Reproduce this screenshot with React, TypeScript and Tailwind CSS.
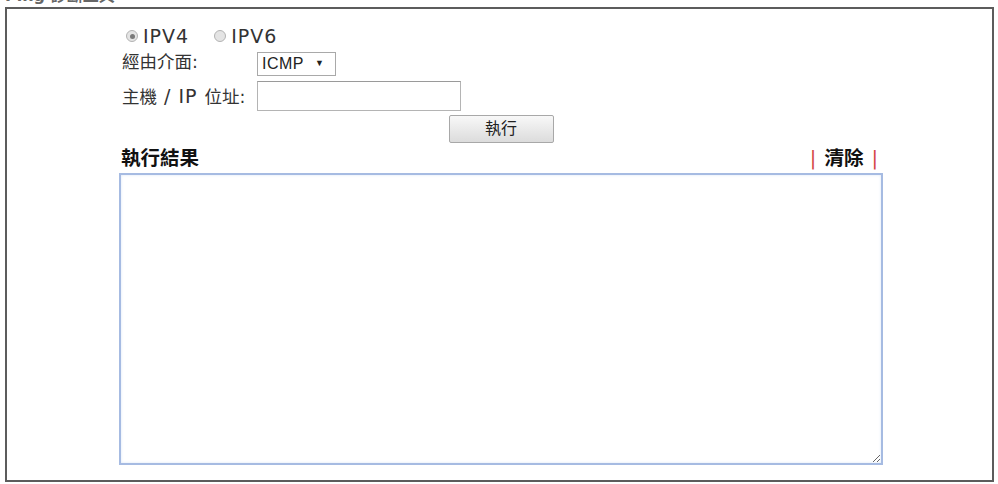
import React from 'react';

const Radio: React.FC<{ checked?: boolean }> = ({ checked }) => (
  <span className="inline-flex h-[12px] w-[12px] items-center justify-center rounded-full border border-[#b3b3b3] bg-[#e4e4e4]">
    {checked && <span className="h-[5px] w-[5px] rounded-full bg-[#7a7a7a]" />}
  </span>
);

const App: React.FC = () => {
  return (
    <div
      className="h-[484px] w-[998px] overflow-hidden bg-white text-[17.5px] text-[#333]"
      style={{ fontFamily: '"DejaVu Sans", "Noto Sans CJK TC", sans-serif' }}
    >
      {/* cut-off page title */}
      <div className="h-[7px] overflow-hidden pl-[5px]">
        <div className="-mt-[13px] text-[16px] font-bold leading-[17px] text-[#666]">Ping 診斷工具</div>
      </div>

      <div className="ml-[5px] h-[475px] w-[989px] border-2 border-[#5c5c5c] pl-[112px] pt-[15px]">
        <div className="w-[764px]">
          {/* protocol */}
          <div className="flex h-[24px] items-center">
            <span className="ml-[7px] mr-[5px] flex"><Radio checked /></span>
            <span className="text-[19px] tracking-[1px]">IPV4</span>
            <span className="ml-[25px] mr-[5px] flex"><Radio /></span>
            <span className="text-[19px] tracking-[1px]">IPV6</span>
          </div>

          {/* interface */}
          <div className="mt-[2px] flex h-[28px] items-center">
            <span className="w-[138px] shrink-0 pb-[4px] pl-[3px]">經由介面:</span>
            <div
              className="flex h-[24px] w-[79px] items-center border border-[#a9a9a9] pl-[4px] text-[16px] text-[#222]"
              style={{ fontFamily: '"Liberation Sans", sans-serif' }}
            >
              <span className="tracking-[0.5px]">ICMP</span>
              <span className="ml-[11px] text-[9px]">▼</span>
            </div>
          </div>

          {/* host */}
          <div className="mt-[2px] flex h-[32px] items-center">
            <span className="w-[138px] shrink-0 pl-[3px]">
              主機<span className="text-[19px] tracking-[1px]"> / IP </span>位址:
            </span>
            <input
              type="text"
              className="h-[30px] w-[204px] border border-[#b4b4b4] border-t-[#9a9a9a] bg-white outline-none"
            />
          </div>

          {/* run */}
          <div className="mt-[3px] flex h-[28px] justify-center">
            <button className="h-[28px] w-[105px] rounded-[2px] border border-[#a8a8a8] bg-gradient-to-b from-[#f8f8f8] to-[#dcdcdc] text-[16px] text-[#222]">
              執行
            </button>
          </div>

          {/* result header */}
          <div className="mt-[3px] flex h-[26px] items-center justify-between pr-[5px]">
            <span className="pl-[2px] text-[19.5px] font-bold text-[#111]">執行結果</span>
            <span className="flex items-center text-[19.5px]">
              <span className="font-normal text-[#d44848]">|</span>
              <span className="mx-[8px] font-bold text-[#111]">清除</span>
              <span className="font-normal text-[#d44848]">|</span>
            </span>
          </div>

          <textarea
            className="mt-[1px] block h-[292px] w-[764px] border-2 border-[#a6bbe2] bg-white shadow-[inset_0_0_3px_#dbe6f7] outline-none"
          />
        </div>
      </div>
    </div>
  );
};

export default App;
